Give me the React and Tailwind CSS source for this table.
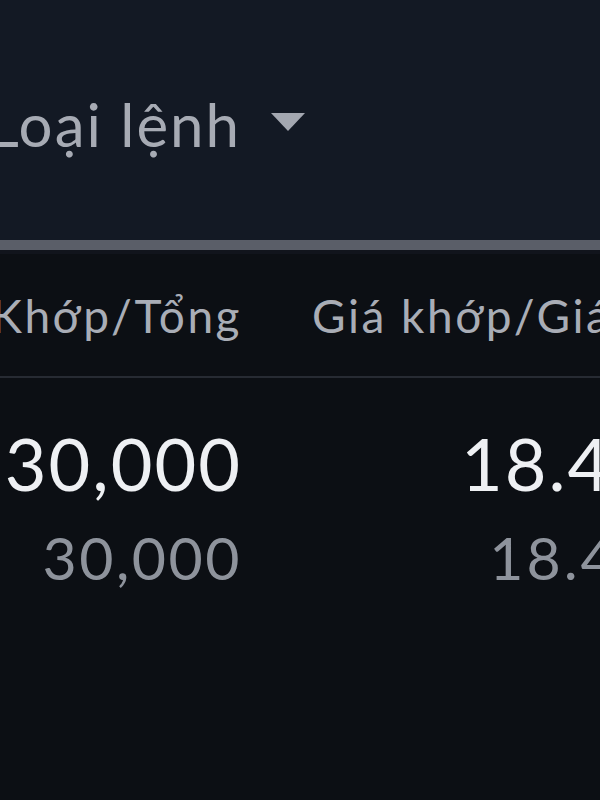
export default function App() {
  return (
    <div className="w-[600px] h-[800px] overflow-hidden bg-[#0c0f14] font-['Lato',sans-serif]">
      {/* filter bar */}
      <div className="h-[240px] bg-[#131924] flex items-start pt-[92px]">
        <div className="flex items-center gap-[28px] ml-[-12px]">
          <span className="text-[60px] leading-[64px] tracking-[2px] text-[#a7abb4] whitespace-nowrap">Loại lệnh</span>
          <svg width="38" height="22" viewBox="0 0 38 22" className="mt-[-4px]">
            <path d="M2 2 H36 L19 20 Z" fill="#a3a7b0" />
          </svg>
        </div>
      </div>
      <div className="h-[10px] bg-[#5a5e68]" />
      <div className="h-[4px] bg-[#11141c]" />

      {/* table header */}
      <div className="flex h-[124px] items-center border-b-2 border-[#272b33]">
        <div className="w-[240px] flex justify-end shrink-0">
          <span className="text-[46px] tracking-[2.5px] mr-[-2px] text-[#a9adb6] whitespace-nowrap">Khớp/Tổng</span>
        </div>
        <div className="ml-[72px] flex whitespace-nowrap">
          <span className="text-[46px] tracking-[2.5px] text-[#a9adb6]">Giá khớp/Giá đặt</span>
        </div>
      </div>

      {/* row */}
      <div className="flex pt-[40px]">
        <div className="w-[240px] flex flex-col items-end shrink-0">
          <span className="text-[72px] leading-[90px] tracking-[2px] mr-[-2px] text-[#eef0f3] whitespace-nowrap">30,000</span>
          <span className="text-[59px] leading-[100px] tracking-[2.5px] mr-[-2px] text-[#8e939c] whitespace-nowrap">30,000</span>
        </div>
        <div className="ml-[70px] w-[345px] flex flex-col items-end shrink-0">
          <span className="text-[72px] leading-[90px] tracking-[2px] text-[#eef0f3] whitespace-nowrap">18.40</span>
          <span className="text-[59px] leading-[100px] tracking-[3px] text-[#8e939c] whitespace-nowrap">18.40</span>
        </div>
      </div>
    </div>
  );
}
